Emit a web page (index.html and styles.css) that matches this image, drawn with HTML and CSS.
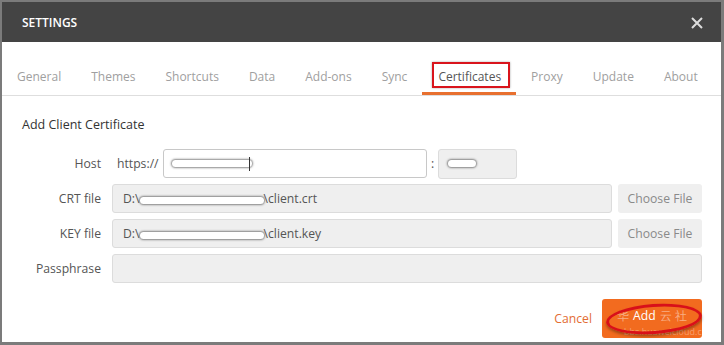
FILE: index.html
```html
<!DOCTYPE html>
<html lang="en">
<head>
  <meta charset="UTF-8">
  <meta name="viewport" content="width=device-width, initial-scale=1.0">
  <title>Settings</title>
  <link rel="stylesheet" href="styles.css">
</head>
<body>
  <div class="dialog">
    <div class="header">
      <span class="title">SETTINGS</span>
      <svg class="close" width="12" height="12" viewBox="0 0 12 12">
        <path d="M1 1 L11 11 M11 1 L1 11" stroke="#dcdcdc" stroke-width="2" fill="none"/>
      </svg>
    </div>

    <div class="tabs">
      <div class="tab">General</div>
      <div class="tab">Themes</div>
      <div class="tab">Shortcuts</div>
      <div class="tab">Data</div>
      <div class="tab">Add-ons</div>
      <div class="tab">Sync</div>
      <div class="tab active">Certificates<span class="mark-box"></span></div>
      <div class="tab">Proxy</div>
      <div class="tab">Update</div>
      <div class="tab">About</div>
    </div>

    <div class="content">
      <h2 class="section-title">Add Client Certificate</h2>

      <div class="form">
        <div class="row">
          <label class="label">Host</label>
          <span class="prefix">https://</span>
          <div class="input host"><span class="redact host-redact"></span><span class="caret"></span></div>
          <span class="colon">:</span>
          <div class="input port"><span class="redact port-redact"></span></div>
        </div>
        <div class="row">
          <label class="label">CRT file</label>
          <div class="input file">D:\<span class="redact path-redact"></span>\client.crt</div>
          <button class="choose">Choose File</button>
        </div>
        <div class="row">
          <label class="label">KEY file</label>
          <div class="input file">D:\<span class="redact path-redact"></span>\client.key</div>
          <button class="choose">Choose File</button>
        </div>
        <div class="row">
          <label class="label">Passphrase</label>
          <div class="input file"></div>
        </div>
      </div>

      <div class="footer">
        <span class="cancel">Cancel</span>
        <button class="add">
          <span class="add-label"><span class="wm">华</span>Add<span class="wm">云 社</span></span>
          <span class="wm-url">bbs.huaweicloud.c</span>
          <span class="mark-ellipse"></span>
        </button>
      </div>
    </div>
  </div>
</body>
</html>
```

FILE: styles.css
```css
body {
  margin: 0;
  background: #7b7b7b;
  font-family: "Open Sans", "Noto Sans", sans-serif;
}
.dialog {
  margin: 2px 3px 0 2px;
  height: 340px;
  background: #fff;
  overflow: hidden;
}
.header {
  height: 40px;
  background: #444;
  display: flex;
  align-items: center;
  justify-content: space-between;
  padding: 0 18px 0 20px;
}
.title {
  color: #fff;
  font-size: 12px;
  font-weight: 600;
}
.close {
  margin-top: 1px;
}
.tabs {
  display: flex;
  height: 53px;
  border-bottom: 1px solid #dedede;
}
.tab {
  position: relative;
  display: flex;
  align-items: center;
  box-sizing: border-box;
  padding: 15px 15px 0 15px;
  font-size: 12px;
  color: #a0a0a0;
  white-space: nowrap;
}
.tab.active {
  color: #555;
  padding: 15px 15px 0 16px;
  box-shadow: inset 0 -3px 0 #e8702f;
}
.mark-box {
  position: absolute;
  left: 10px;
  right: 6px;
  top: 20px;
  bottom: 7px;
  border: 2px solid #d9141c;
  box-shadow: 0 0 2px rgba(0, 0, 0, 0.35);
}
.content {
  padding: 0 19px 0 20px;
}
.section-title {
  margin: 20px 0 15px 0;
  font-size: 12.5px;
  font-weight: 400;
  line-height: 18px;
  color: #333;
}
.form {
  display: flex;
  flex-direction: column;
  gap: 6px;
}
.row {
  display: flex;
  align-items: center;
  height: 29px;
  font-size: 12.2px;
}
.label {
  width: 79px;
  margin-right: 11px;
  text-align: right;
  color: #555;
}
.prefix {
  width: 46px;
  padding-left: 5px;
  color: #555;
}
.input {
  box-sizing: border-box;
  height: 29px;
  border: 1px solid #dcdcdc;
  border-radius: 3px;
  background: #efefef;
  display: flex;
  align-items: center;
  padding-left: 10px;
  color: #555;
}
.input.host {
  width: 264px;
  background: #fff;
  border-color: #c8c8c8;
}
.colon {
  width: 11px;
  text-align: center;
  color: #555;
}
.input.port {
  width: 79px;
  height: 30px;
}
.input.file {
  flex: 1;
}
.redact {
  display: inline-block;
  height: 7px;
  background: #fff;
  border-radius: 4px;
  box-shadow: 0 0 2px 1px rgba(60, 60, 60, 0.6);
}
.host-redact {
  width: 80px;
  margin-left: -2px;
}
.caret {
  width: 1px;
  height: 14px;
  background: #333;
  margin-left: -3px;
}
.port-redact {
  width: 28px;
  margin-left: -1px;
}
.path-redact {
  width: 124px;
  margin: 3px 0 0 0;
}
.choose {
  width: 84px;
  height: 29px;
  margin-left: 6px;
  border: none;
  border-radius: 3px;
  background: #efefef;
  color: #8a8a8a;
  font-family: inherit;
  font-size: 12.2px;
  padding: 0;
}
.footer {
  display: flex;
  justify-content: flex-end;
  align-items: center;
  gap: 10px;
  margin-top: 16px;
}
.cancel {
  font-size: 12.2px;
  color: #e36d34;
}
.add {
  position: relative;
  width: 100px;
  height: 39px;
  border: none;
  border-radius: 3px;
  background: #f26b1f;
  color: #fff;
  font-family: inherit;
  font-size: 12.2px;
  padding: 0;
}
.add-label {
  display: block;
  line-height: 14px;
  margin-top: -6px;
}
.wm {
  color: rgba(255, 255, 255, 0.45);
  margin: 0 4px;
}
.wm-url {
  position: absolute;
  left: 22px;
  bottom: 1px;
  font-size: 9px;
  line-height: 10px;
  color: rgba(255, 255, 255, 0.35);
  white-space: nowrap;
}
.mark-ellipse {
  position: absolute;
  left: 4px;
  top: 5px;
  width: 90px;
  height: 24px;
  border: 3px solid #d8101a;
  border-radius: 50%;
  transform: rotate(-4deg);
  box-shadow: 0 2px 3px rgba(0, 0, 0, 0.35);
}
```
